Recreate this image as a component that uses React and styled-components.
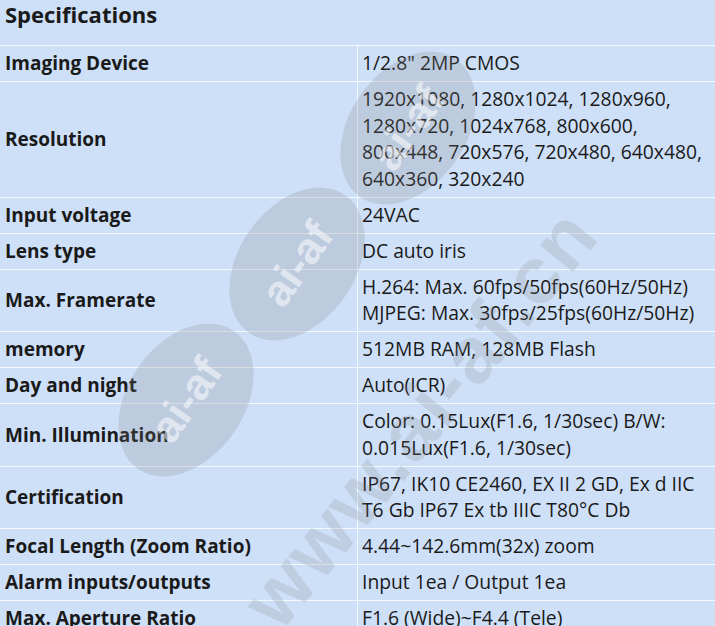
import styled, { createGlobalStyle } from "styled-components";

const GlobalStyle = createGlobalStyle`
    html, body {
        margin: 0;
        padding: 0;
        background: #cee0f8;
    }
    body {
        font-family: "Open Sans", "Noto Sans", sans-serif;
        color: #1a1a1a;
    }
`

const Page = styled.div`
    position: relative;
    width: 715px;
    height: 626px;
    overflow: hidden;
    background: #cee0f8;
`
const Title = styled.h2`
    margin: 0;
    height: 45px;
    box-sizing: border-box;
    padding: 0 5px;
    font-size: 22px;
    line-height: 28px;
    font-weight: 700;
`
const Table = styled.div`
    display: flex;
    flex-direction: column;
`
const Row = styled.div`
    display: grid;
    grid-template-columns: 358px 1fr;
    border-top: 1px solid #f3f8ff;
`
const Label = styled.div`
    display: flex;
    align-items: center;
    padding: 4.25px 5px;
    border-right: 1px solid #f3f8ff;
    font-size: 19px;
    line-height: 26.5px;
    font-weight: 700;
`
const Value = styled.div`
    padding: 4.25px 8px 4.25px 4px;
    font-size: 19.3px;
    line-height: 26.5px;
`

// watermark overlay
const Overlay = styled.div`
    position: absolute;
    inset: 0;
    pointer-events: none;
`
const Badge = styled.div`
    position: absolute;
    left: ${p => p.x}px;
    top: ${p => p.y}px;
    width: 168px;
    height: 116px;
    border-radius: 50%;
    background: rgba(128, 128, 128, 0.21);
    transform: translate(-50%, -50%) rotate(-55deg);
    display: flex;
    align-items: center;
    justify-content: center;
    font-family: "Liberation Sans", Arial, sans-serif;
    font-weight: 700;
    font-size: 44px;
    color: rgba(255, 255, 255, 0.55);
`
const Site = styled.div`
    position: absolute;
    left: 420px;
    top: 418px;
    transform: translate(-50%, -50%) rotate(-51deg);
    white-space: nowrap;
    font-family: "Liberation Sans", Arial, sans-serif;
    font-weight: 700;
    font-size: 80px;
    letter-spacing: 2px;
    color: rgba(128, 128, 128, 0.2);
`

const specs = [
    ["Imaging Device", ["1/2.8\" 2MP CMOS"]],
    ["Resolution", [
        "1920x1080, 1280x1024, 1280x960,",
        "1280x720, 1024x768, 800x600,",
        "800x448, 720x576, 720x480, 640x480,",
        "640x360, 320x240",
    ]],
    ["Input voltage", ["24VAC"]],
    ["Lens type", ["DC auto iris"]],
    ["Max. Framerate", [
        "H.264: Max. 60fps/50fps(60Hz/50Hz)",
        "MJPEG: Max. 30fps/25fps(60Hz/50Hz)",
    ]],
    ["memory", ["512MB RAM, 128MB Flash"]],
    ["Day and night", ["Auto(ICR)"]],
    ["Min. Illumination", [
        "Color: 0.15Lux(F1.6, 1/30sec) B/W:",
        "0.015Lux(F1.6, 1/30sec)",
    ]],
    ["Certification", [
        "IP67, IK10 CE2460, EX II 2 GD, Ex d IIC",
        "T6 Gb IP67 Ex tb IIIC T80°C Db",
    ]],
    ["Focal Length (Zoom Ratio)", ["4.44~142.6mm(32x) zoom"]],
    ["Alarm inputs/outputs", ["Input 1ea / Output 1ea"]],
    ["Max. Aperture Ratio", ["F1.6 (Wide)~F4.4 (Tele)"]],
]

export default function App() {
    return (
        <Page>
            <GlobalStyle />
            <Title>Specifications</Title>
            <Table>
                {specs.map(([label, lines]) => (
                    <Row key={label}>
                        <Label>{label}</Label>
                        <Value>
                            {lines.map((l, i) => (
                                <div key={i}>{l}</div>
                            ))}
                        </Value>
                    </Row>
                ))}
            </Table>
            <Overlay>
                <Badge x={408} y={128}>ai-af</Badge>
                <Badge x={297} y={264}>ai-af</Badge>
                <Badge x={186} y={400}>ai-af</Badge>
                <Site>www.ai-af.cn</Site>
            </Overlay>
        </Page>
    )
}
